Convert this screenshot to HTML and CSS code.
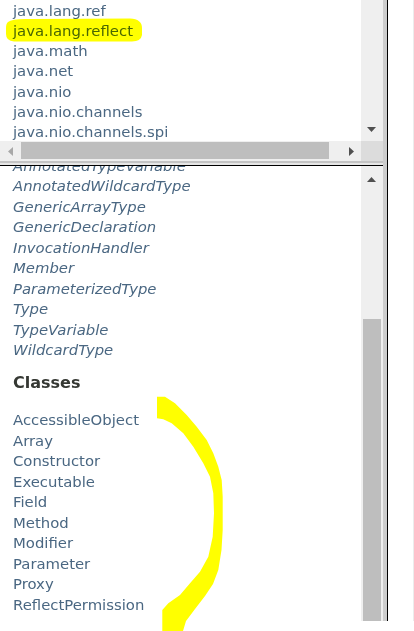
FILE: index.html
```html
<!DOCTYPE html>
<html>
<head>
<meta charset="utf-8">
<link rel="stylesheet" href="styles.css">
</head>
<body>
<div class="page">
  <div class="frames">
    <div class="leftcol">
      <div class="topframe">
        <div class="tf-main">
          <div class="tf-content">
            <ul class="pkglist">
              <li><a>java.lang.ref</a></li>
              <li><a>java.lang.reflect</a></li>
              <li><a>java.math</a></li>
              <li><a>java.net</a></li>
              <li><a>java.nio</a></li>
              <li><a>java.nio.channels</a></li>
              <li><a>java.nio.channels.spi</a></li>
            </ul>
          </div>
          <div class="vscroll vscroll-top">
            <svg class="arrow" width="9" height="5" viewBox="0 0 9 5"><polygon points="0,0 9,0 4.5,5" fill="#505050"/></svg>
          </div>
        </div>
        <div class="hscroll-row">
          <div class="hscroll">
            <div class="harrow"><svg width="5" height="9" viewBox="0 0 5 9"><polygon points="5,0 5,9 0,4.5" fill="#a8a8a8"/></svg></div>
            <div class="hthumb"></div>
            <div class="harrow"><svg width="5" height="9" viewBox="0 0 5 9"><polygon points="0,0 0,9 5,4.5" fill="#505050"/></svg></div>
          </div>
          <div class="corner"></div>
        </div>
      </div>
      <div class="hsep"></div>
      <div class="bottomframe">
        <div class="bf-content">
          <ul class="typelist first">
            <li><a class="iface">AnnotatedTypeVariable</a></li>
            <li><a class="iface">AnnotatedWildcardType</a></li>
            <li><a class="iface">GenericArrayType</a></li>
            <li><a class="iface">GenericDeclaration</a></li>
            <li><a class="iface">InvocationHandler</a></li>
            <li><a class="iface">Member</a></li>
            <li><a class="iface">ParameterizedType</a></li>
            <li><a class="iface">Type</a></li>
            <li><a class="iface">TypeVariable</a></li>
            <li><a class="iface">WildcardType</a></li>
          </ul>
          <h2 class="section-title">Classes</h2>
          <ul class="typelist">
            <li><a>AccessibleObject</a></li>
            <li><a>Array</a></li>
            <li><a>Constructor</a></li>
            <li><a>Executable</a></li>
            <li><a>Field</a></li>
            <li><a>Method</a></li>
            <li><a>Modifier</a></li>
            <li><a>Parameter</a></li>
            <li><a>Proxy</a></li>
            <li><a>ReflectPermission</a></li>
          </ul>
        </div>
        <div class="vscroll vscroll-bottom">
          <svg class="arrow" width="9" height="5" viewBox="0 0 9 5"><polygon points="0,5 9,5 4.5,0" fill="#505050"/></svg>
          <div class="vthumb"></div>
        </div>
      </div>
    </div>
    <div class="vsep"></div>
    <div class="rightframe"></div>
  </div>
  <svg class="annot" width="414" height="631" viewBox="0 0 414 631">
    <path fill="#ffff00" d="M8,22 Q12,18.5 30,19 L130,18.5 Q142,19 142,28 L142,35 Q141,41.5 132,41.5 L14,41.5 Q6,41 6,34 L6,28 Q6,23.5 8,22 Z"/>
    <path fill="#ffff00" d="M157,396.7 L165,396.7 L175,403.3 L186.7,415 L196.7,426.7 L206.7,440 L213.3,453.3 L218.3,466.7 L221.7,480 L222.7,496.7 L222.7,530 L221.5,550 L218.3,570 L213,584 L205,596 L195,609 L186,621 L183,631 L162.3,631 L162.3,610 L168.3,603.3 L180,595 L190,583.3 L200,571.7 L208.3,556.7 L212.7,536.7 L214,513.3 L213.3,493.3 L210,476.7 L203.3,463.3 L193.3,446.7 L183.3,433.3 L171.7,423.3 L163.3,419.3 L157,418.3 Z"/>
  </svg>
</div>
</body>
</html>
```

FILE: styles.css
```css
html, body {
  margin: 0;
  padding: 0;
  background: #ffffff;
}

.page {
  position: relative;
  width: 414px;
  height: 631px;
  overflow: hidden;
  font-family: "DejaVu Sans", "Liberation Sans", sans-serif;
}

.frames {
  display: flex;
  height: 621px;
}

.leftcol {
  width: 383px;
  display: flex;
  flex-direction: column;
}

/* ---------- top frame ---------- */
.topframe {
  height: 161px;
  display: flex;
  flex-direction: column;
}

.tf-main {
  height: 141px;
  display: flex;
}

.tf-content {
  width: 361px;
  overflow: hidden;
  padding-left: 13px;
  box-sizing: border-box;
}

.pkglist {
  list-style: none;
  margin: 0;
  padding: 0.8px 0 0 0;
  font-size: 14.85px;
  line-height: 20.2px;
  color: #4a6782;
  white-space: nowrap;
}

.vscroll {
  width: 22px;
  background: #efefef;
  display: flex;
  flex-direction: column;
  align-items: flex-start;
}

.vscroll-top {
  justify-content: flex-end;
  padding-bottom: 9px;
  box-sizing: border-box;
}

.vscroll .arrow {
  display: block;
  margin-left: 6px;
}

.hscroll-row {
  height: 20px;
  display: flex;
}

.hscroll {
  width: 361px;
  background: #efefef;
  display: flex;
  align-items: flex-start;
}

.harrow {
  width: 20px;
  height: 20px;
  display: flex;
  align-items: center;
  justify-content: center;
}

.harrow svg {
  display: block;
}

.hthumb {
  margin-top: 1px;
  margin-left: 1px;
  width: 308px;
  height: 17px;
  background: #bebebe;
}

.hscroll .harrow:last-child {
  margin-left: auto;
}

.corner {
  width: 22px;
  background: #dcdcdc;
}

.hsep {
  height: 5px;
  box-sizing: border-box;
  border-top: 2px solid #c4c4c4;
  border-bottom: 1px solid #000000;
  background: #e6e6e6;
}

/* ---------- bottom frame ---------- */
.bottomframe {
  flex: 1;
  display: flex;
  min-height: 0;
}

.bf-content {
  width: 361px;
  overflow: hidden;
  padding-left: 13px;
  box-sizing: border-box;
}

.typelist {
  list-style: none;
  margin: 0;
  padding: 0;
  font-size: 14.85px;
  line-height: 20.5px;
  color: #4a6782;
  white-space: nowrap;
}

.typelist.first {
  margin-top: -10.4px;
}

.iface {
  font-style: italic;
}

.section-title {
  margin: 12px 0 17.6px 0;
  font-size: 16px;
  line-height: 20px;
  font-weight: bold;
  color: #353833;
}

.vscroll-bottom {
  padding-top: 11px;
  box-sizing: border-box;
}

.vthumb {
  margin-top: 137px;
  margin-left: 2px;
  width: 18px;
  flex: 1;
  background: #bebebe;
}

/* ---------- separators / right frame ---------- */
.vsep {
  width: 5px;
  box-sizing: border-box;
  background: #cdcdcd;
  border-right: 1px solid #000000;
}

.rightframe {
  width: 26px;
  box-sizing: border-box;
  border-right: 1px solid #ececec;
  background: #ffffff;
}

/* ---------- hand-drawn annotations ---------- */
.annot {
  position: absolute;
  left: 0;
  top: 0;
  pointer-events: none;
  mix-blend-mode: multiply;
}
```
